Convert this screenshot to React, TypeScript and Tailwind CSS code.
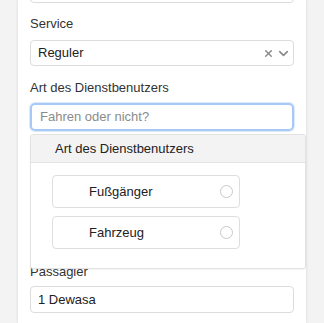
import { X, ChevronDown } from 'lucide-react';

const font = { fontFamily: '"Liberation Sans", Arial, sans-serif' };

function Label({ children }: { children: React.ReactNode }) {
  return <div className="h-[20px] leading-[20px] text-[13px] text-[#333]">{children}</div>;
}

function Option({ label }: { label: string }) {
  return (
    <div className="flex h-[33px] w-[188px] items-center justify-between rounded-[4px] border border-[#dedede] bg-white pl-[36px] pr-[6px]">
      <span className="text-[13px] text-[#222]">{label}</span>
      <span className="h-[13px] w-[13px] rounded-full border border-[#c8c8c8]" />
    </div>
  );
}

export default function App() {
  return (
    <div className="flex min-h-[323px] w-[324px] overflow-hidden bg-[#f3f3f3]" style={font}>
      <div className="relative ml-[18px] flex h-[323px] w-[288px] flex-col bg-white px-[12px] shadow-[0_0_3px_rgba(0,0,0,0.12)]">
        {/* previous field, scrolled off */}
        <div className="mt-[-24px] h-[27px] rounded-[4px] border border-[#dcdcdc]" />

        <div className="mt-[11px]">
          <Label>Service</Label>
        </div>
        <div className="mt-[6px] flex h-[26px] items-center justify-between rounded-[4px] border border-[#dcdcdc] pl-[7px] pr-[2px]">
          <span className="text-[13px] text-[#222]">Reguler</span>
          <div className="flex items-center gap-[2px] text-[#8a8a8a]">
            <X size={11} strokeWidth={3} />
            <ChevronDown size={15} strokeWidth={2.6} />
          </div>
        </div>

        <div className="mt-[12px]">
          <Label>Art des Dienstbenutzers</Label>
        </div>
        <div className="mt-[5px] flex h-[28px] items-center rounded-[5px] border-2 border-[#a7c9f6] pl-[8px] shadow-[0_0_0_1px_#dce9fb]">
          <span className="text-[13px] text-[#8b8b8b]">Fahren oder nicht?</span>
        </div>

        <div className="mt-[131px]">
          <Label>Passagier</Label>
        </div>
        <div className="mt-[4px] flex h-[27px] items-center rounded-[4px] border border-[#dcdcdc] pl-[7px]">
          <span className="text-[13px] text-[#222]">1 Dewasa</span>
        </div>

        {/* dropdown popover */}
        <div className="absolute left-[12px] top-[134px] h-[135px] w-[276px] overflow-hidden rounded-[3px] border border-[#e2e2e2] bg-white shadow-[0_1px_2px_rgba(0,0,0,0.05)]">
          <div className="flex h-[28px] items-center border-b border-[#e4e4e4] bg-[#f3f3f3] pl-[24px]">
            <span className="text-[13px] font-medium text-[#222]">Art des Dienstbenutzers</span>
          </div>
          <div className="flex flex-col gap-[8px] pl-[21px] pt-[12px]">
            <Option label="Fußgänger" />
            <Option label="Fahrzeug" />
          </div>
        </div>
      </div>
    </div>
  );
}
